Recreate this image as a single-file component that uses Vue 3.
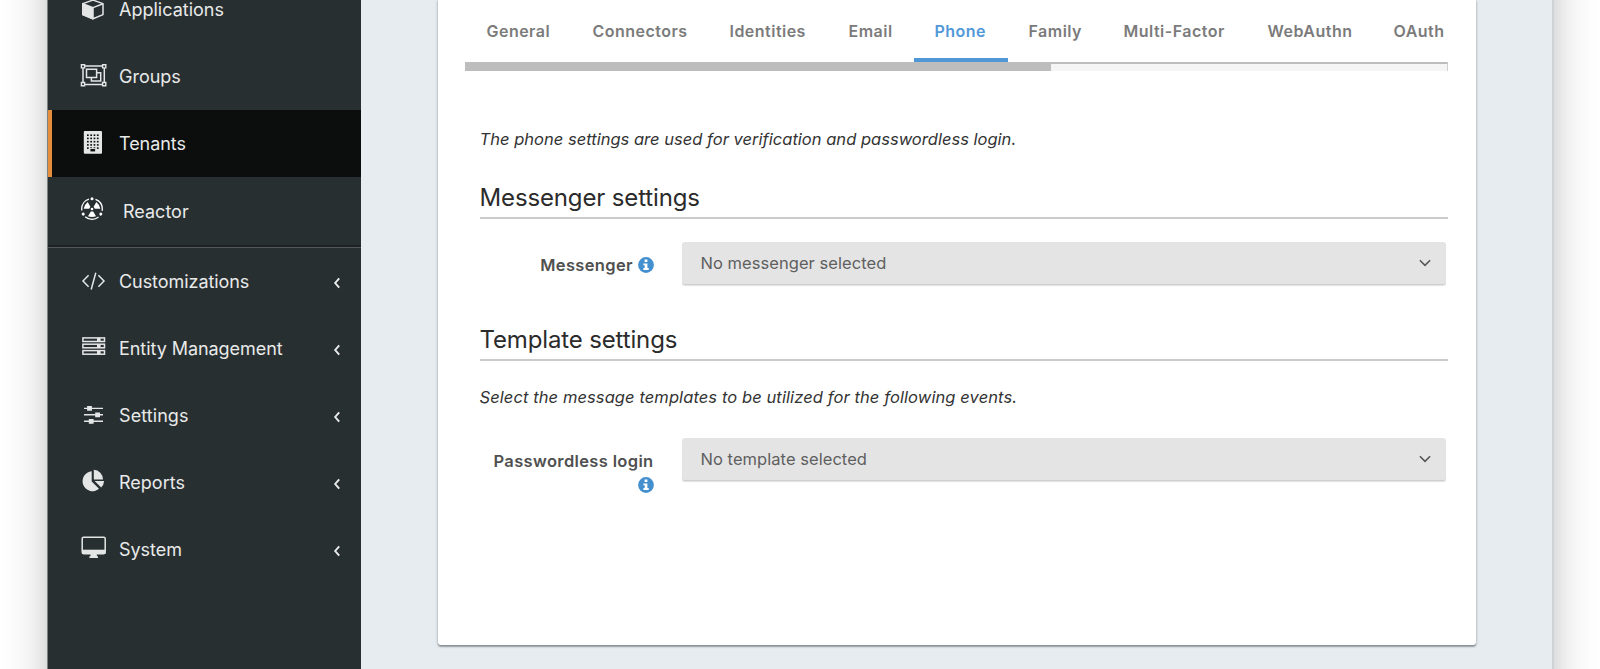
<script setup>
const mainItems = [
  { name: 'Applications', icon: 'cube', ls: 0 },
  { name: 'Groups', icon: 'group', ls: 0 },
  { name: 'Tenants', icon: 'building', active: true, ls: -0.06 },
  { name: 'Reactor', icon: 'reactor', indent: true, ls: 0 },
]
const moreItems = [
  { name: 'Customizations', icon: 'code', ls: -0.06 },
  { name: 'Entity Management', icon: 'servers', ls: -0.06 },
  { name: 'Settings', icon: 'sliders', ls: 0.08 },
  { name: 'Reports', icon: 'pie', ls: 0 },
  { name: 'System', icon: 'monitor', ls: -0.04 },
]
const groups = [mainItems, moreItems]
const tabs = [
  { name: 'General', w: 106 },
  { name: 'Connectors', w: 137 },
  { name: 'Identities', w: 119 },
  { name: 'Email', w: 86 },
  { name: 'Phone', w: 94, active: true },
  { name: 'Family', w: 95 },
  { name: 'Multi-Factor', w: 144 },
  { name: 'WebAuthn', w: 126 },
  { name: 'OAuth', w: 75 },
]
const windows = [6.4, 9.7, 13, 16.3]
const floors = [24.4, 27.6, 30.9, 34.1, 37.3]
</script>

<template>
  <div class="page">
    <div class="window">
      <nav class="sidebar">
        <ul v-for="(items, g) in groups" :key="g" class="menu">
          <li v-for="item in items" :key="item.name" class="item" :class="{ active: item.active }">
            <svg class="icon" width="32" height="67" viewBox="0 0 32 67" fill="none" stroke="#e4e6e6" stroke-width="1.5">
              <g v-if="item.icon === 'cube'" stroke-linejoin="round">
                <path d="M16 24.1 26 27.6V38.6L16 42.8 5.8 38.6V27.6Z" />
                <path d="M5.8 27.8 16 31.6V42.8L5.8 38.6Z" fill="#e4e6e6" />
                <path d="M16 31.6 26 27.8" />
              </g>
              <g v-else-if="item.icon === 'group'">
                <path d="M8 23H25M8 41.4H25M6 25V39.5M27.3 25V39.5" />
                <path d="M4.4 21.7h3.2v3.2H4.4zM25.6 21.7h3.2v3.2h-3.2zM4.4 39.5h3.2v3.2H4.4zM25.6 39.5h3.2v3.2h-3.2z" stroke-width="1.4" />
                <path d="M9.5 26.2H19.6V34.6H9.5ZM19.6 29.7H23.7V38H14.4V34.8" />
              </g>
              <g v-else-if="item.icon === 'building'" stroke="none">
                <rect x="6.8" y="21" width="18.2" height="22.8" rx="1" fill="#e4e6e6" />
                <g fill="#0c0e0d">
                  <template v-for="y in floors" :key="y">
                    <rect v-for="x in windows" :key="x" :x="x + 3.6" :y="y" width="1.7" height="1.6" />
                  </template>
                  <rect x="13" y="38.6" width="5.6" height="3.3" stroke="#e4e6e6" stroke-width=".9" />
                </g>
              </g>
              <g v-else-if="item.icon === 'reactor'" transform="translate(15 32)" stroke="#fff">
                <circle r="10.3" stroke-width="1.3" stroke-dasharray="14.5 7.07" stroke-dashoffset="-3.54" transform="rotate(-90)" />
                <g v-for="a in [0, 120, 240]" :key="a" :transform="`rotate(${a})`" fill="#fff" stroke="none">
                  <path d="M-1.2 2.6H1.2L4 7.3Q0 8.9-4 7.3Z" />
                  <circle cy="-10.2" r="1.5" />
                </g>
                <circle r="1.3" fill="#fff" stroke="none" />
              </g>
              <path v-else-if="item.icon === 'code'" d="M11.6 27.2 6 33 11.6 38.8M21.4 27.2 27 33 21.4 38.8M18.8 24.8 14.2 41.5" />
              <g v-else-if="item.icon === 'servers'">
                <g v-for="y in [22.9, 29.2, 35.6]" :key="y">
                  <rect x="5.9" :y="y" width="21.6" height="3.6" />
                  <path :d="`M20 ${y + 1.8}h3.6`" stroke-width="3.6" />
                </g>
              </g>
              <g v-else-if="item.icon === 'sliders'">
                <path d="M7 26.4H26M7 32.8H26M7 39.3H26" stroke-width="1.4" />
                <path d="M10.1 26.4h4.8M18.2 32.8h4.8M11.8 39.3h4.8" stroke-width="4.8" />
              </g>
              <g v-else-if="item.icon === 'pie'" fill="#e4e6e6" stroke="none">
                <path d="M14.7 22.2V32.4L22 39.8A10 10 0 1 1 14.7 22.2Z" />
                <path d="M16.8 20.8A9.8 9.8 0 0 1 26 30.4H16.8Z" />
                <path d="M17.6 31.9H27.1A9.8 9.8 0 0 1 24.1 38.4Z" />
              </g>
              <g v-else-if="item.icon === 'monitor'">
                <rect x="5.2" y="21.2" width="23" height="16.5" rx="1.4" />
                <path d="M5 35.8H28.4" stroke-width="4.2" />
                <path d="M13.7 37H19.6L20 40.3H21V42H12.4V40.3H13.4Z" fill="#e4e6e6" stroke="none" />
              </g>
            </svg>
            <span class="name" :class="{ indent: item.indent }" :style="{ letterSpacing: item.ls + 'px' }">{{ item.name }}</span>
            <svg v-if="g === 1" class="caret" width="8" height="12" viewBox="0 0 8 12" fill="none" stroke="#eceeee" stroke-width="1.9">
              <path d="M6.2 1.4 2.2 6 6.2 10.6" />
            </svg>
          </li>
        </ul>
      </nav>

      <main class="content">
        <section class="card">
          <div class="tabs">
            <div v-for="t in tabs" :key="t.name" class="tab" :class="{ on: t.active }" :style="{ width: t.w + 'px' }">{{ t.name }}</div>
          </div>
          <div class="scrollbar"><div class="thumb"></div></div>

          <div class="body">
            <p class="note first">The phone settings are used for verification and passwordless login.</p>
            <h2>Messenger settings</h2>
            <div class="row">
              <label>Messenger
                <svg class="info" width="16" height="16" viewBox="0 0 16 16"><circle cx="8" cy="8" r="7.9" fill="#448fce" /><path d="M6.6 2.6H9.4V5H6.6ZM5.4 6.4H9.4V11H10.7V12.9H5.4V11H6.7V8.3H5.4Z" fill="#fff" /></svg>
              </label>
              <div class="select"><span>No messenger selected</span>
                <svg width="14" height="10" viewBox="0 0 14 10" fill="none" stroke="#555" stroke-width="1.6"><path d="M1.9 2.3 7 7.4 12.1 2.3" /></svg>
              </div>
            </div>
            <h2 class="second">Template settings</h2>
            <p class="note wide">Select the message templates to be utilized for the following events.</p>
            <div class="row last">
              <label>Passwordless login
                <svg class="info" width="16" height="16" viewBox="0 0 16 16"><circle cx="8" cy="8" r="7.9" fill="#448fce" /><path d="M6.6 2.6H9.4V5H6.6ZM5.4 6.4H9.4V11H10.7V12.9H5.4V11H6.7V8.3H5.4Z" fill="#fff" /></svg>
              </label>
              <div class="select"><span>No template selected</span>
                <svg width="14" height="10" viewBox="0 0 14 10" fill="none" stroke="#555" stroke-width="1.6"><path d="M1.9 2.3 7 7.4 12.1 2.3" /></svg>
              </div>
            </div>
          </div>
        </section>
      </main>
    </div>
  </div>
</template>

<style>
body { background: #fff; }
</style>

<style scoped>
* { box-sizing: border-box; }
.page {
  height: 669px;
  overflow: hidden;
  padding: 0 46px 0 47px;
  font-family: Inter, "Liberation Sans", sans-serif;
}
.window {
  display: flex;
  height: 789px;
  margin-top: -60px;
  background: #e7ecf0;
  border-left: 1px solid #7d8283;
  border-right: 2px solid #cfd3d6;
  box-shadow: 0 0 46px rgba(0, 0, 0, .2), 0 0 18px rgba(0, 0, 0, .07);
}
.sidebar { width: 313px; padding-top: 36px; background: #282f31; flex: none; }
.menu { list-style: none; margin: 0; padding: 0; }
.menu:first-child { height: 271px; border-bottom: 2px solid #1d2223; }
.menu + .menu { border-top: 1px solid #525859; }
.item { display: flex; align-items: center; height: 67px; padding: 0 20px 0 29px; color: #e8eaea; font-size: 18px; }
.active { background: #0c0e0d; border-left: 4px solid #e58f3c; padding-left: 25px; }
.icon { flex: none; margin-right: 10px; }
.name { line-height: 24px; padding-top: 1px; white-space: nowrap; }
.indent { margin-left: 4px; padding-top: 2px; }
.caret { margin-left: auto; margin-top: 3px; }
.content { padding: 60px 0 0 77px; }
.card {
  width: 1038px;
  height: 645px;
  padding: 0 28px 0 27px;
  background: #fff;
  border-radius: 0 0 3px 3px;
  box-shadow: 0 1px 3px rgba(40, 50, 55, .45), 0 2px 1px rgba(40, 50, 55, .25);
}
.tabs { display: flex; height: 62px; padding-left: .5px; overflow: hidden; }
.tab { flex: none; padding: 19px 0 0 21px; line-height: 24px; font-size: 16px; font-weight: 600; letter-spacing: .48px; color: #7b7b7b; white-space: nowrap; }
.on { color: #5198d8; border-bottom: 4px solid #5097d8; }
.scrollbar { height: 9px; background: #f5f5f5; border-top: 2px solid #bdbdbd; border-right: 1px solid #d0d0d0; }
.thumb { width: 586px; height: 9px; margin-top: -2px; background: #bdbdbd; }
.body { padding-left: 14.5px; }
p, h2 { margin: 0; }
.note { font-size: 16.5px; line-height: 24px; font-style: italic; letter-spacing: .02px; color: #333; white-space: nowrap; }
.wide { letter-spacing: .095px; }
.first { margin-top: 56px; }
h2 { margin-top: 32px; height: 36px; line-height: 30px; font-size: 24px; font-weight: 400; letter-spacing: -.14px; color: #2b2b2b; border-bottom: 2px solid #cbcbcb; }
.row { display: flex; justify-content: space-between; margin-top: 23px; padding-right: 2px; }
label { width: 174px; padding-top: 11px; text-align: right; font-size: 16.5px; line-height: 24px; font-weight: 600; letter-spacing: .35px; color: #505050; }
.info { vertical-align: -2px; }
.select { display: flex; justify-content: space-between; align-items: center; width: 764.5px; height: 43px; padding: 0 14px 1px 19px; background: #e4e4e4; border-radius: 3px; border-bottom: 1px solid #cfcfcf; box-shadow: 0 1px 1px rgba(0, 0, 0, .12); font-size: 16.5px; letter-spacing: .05px; color: #5f5f5f; }
.second { margin-top: 40px; }
.second + .note { margin-top: 24px; }
.last { margin-top: 29px; }
</style>
